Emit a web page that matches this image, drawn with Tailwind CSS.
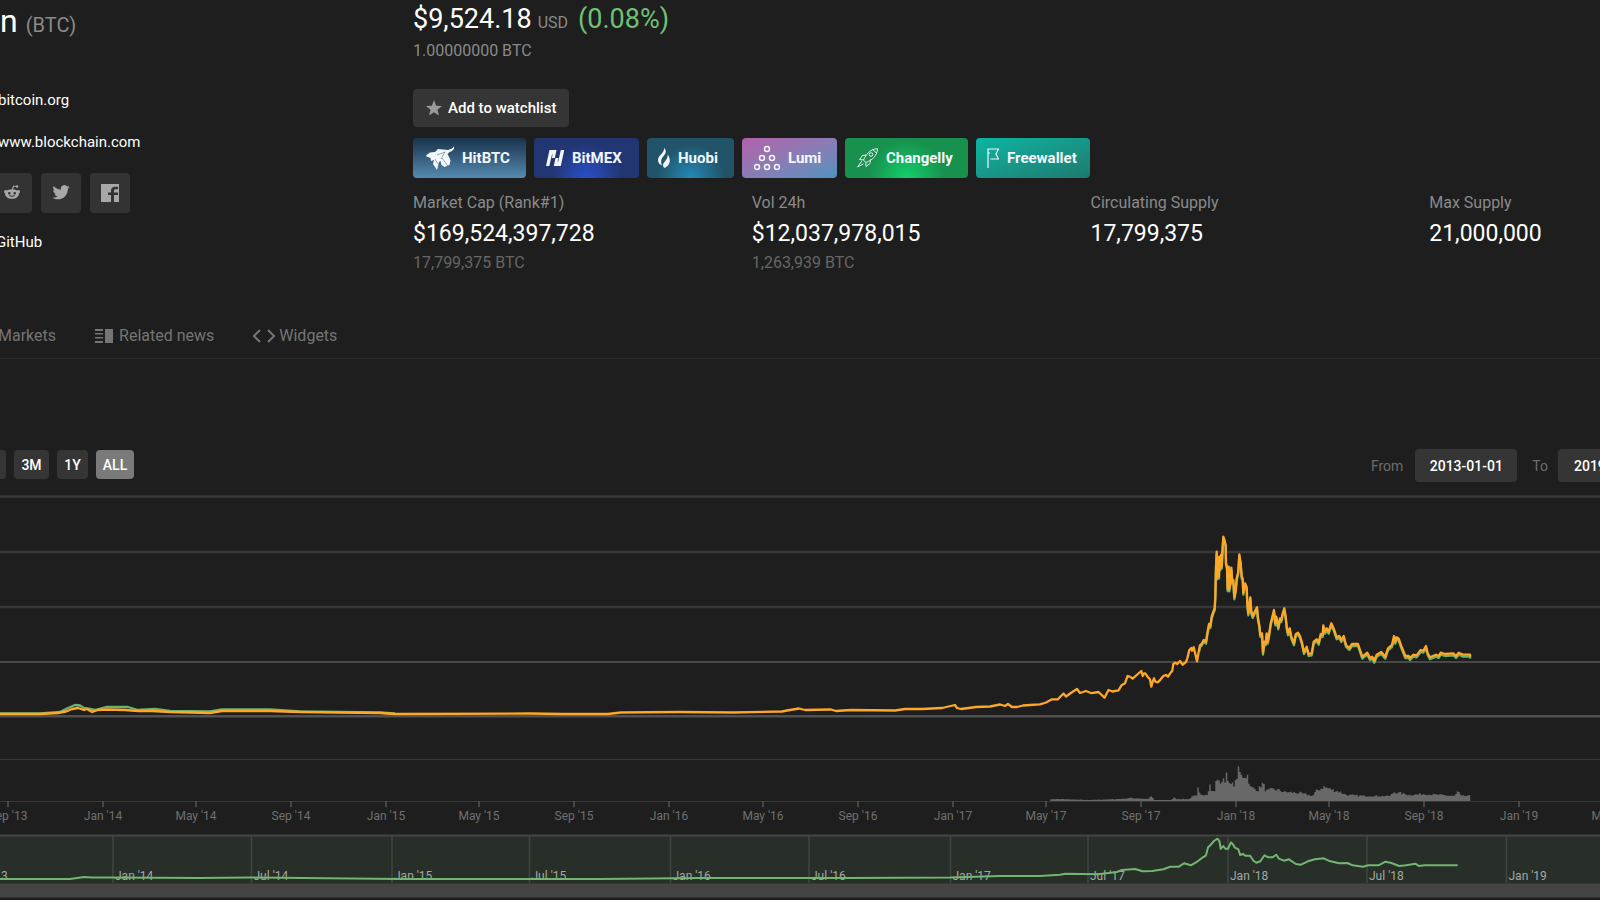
<!DOCTYPE html>
<html lang="en">
<head>
<meta charset="utf-8">
<title>Bitcoin (BTC)</title>
<script src="https://cdn.jsdelivr.net/npm/@tailwindcss/browser@4"></script>
</head>
<body class="min-h-screen overflow-x-hidden bg-[#1e1e1e] font-[Roboto,sans-serif] text-base text-white">
<div class="overflow-hidden">
  <header class="flex h-[318px] pt-px">
    <aside class="w-[413px] shrink-0">
      <h1 class="flex h-[39px] items-baseline gap-2 text-[32px] leading-[41px]">n <span class="text-xl text-[#8a8a8a]">(BTC)</span></h1>
      <div class="-ml-0.5 mt-12 flex flex-col items-start gap-[18px] text-[15px] leading-6">
        <a href="#">bitcoin.org</a>
        <a href="#">www.blockchain.com</a>
      </div>
      <div class="-ml-2 mt-[19px] flex gap-[9px]">
        <a href="#" aria-label="Reddit" class="flex size-10 items-center justify-center rounded bg-[#333]"><svg class="size-[18px] text-[#a8a8a8]" viewBox="0 0 18 18" fill="currentColor"><path fill-rule="evenodd" d="M9 5.3c.3-1.800 1-3.300 1.500-3.700.5-.2 1.600.2 2.400.4.3-1 2.400-1 2.500.5 0 1.500-2.100 1.800-2.500.5l-1.900-.4-.9 2.800c1.700.1 3 .5 4.100 1.100 1.500-1.100 3.400.4 2.800 1.700-.2.500-.6.800-1 1 .1 3.500-3.100 5.500-7 5.500s-7.100-2-7-5.500C.500 8.400.900 6.100 2.600 6c.4 0 .8.200 1.200.5C5 5.900 6.700 5.400 9 5.300ZM6.300 8a1.300 1.300 0 1 0 0 2.600 1.300 1.300 0 0 0 0-2.600Zm5.400 0a1.300 1.300 0 1 0 0 2.600 1.300 1.300 0 0 0 0-2.600ZM6 11.500c1.500 1.700 4.500 1.700 6 0l-.5-.4c-1.300 1-3.700 1-5 0Z"/></svg></a>
        <a href="#" aria-label="Twitter" class="flex size-10 items-center justify-center rounded bg-[#333]"><svg class="size-[18px] text-[#a8a8a8]" viewBox="0 1 24 24" fill="currentColor"><path d="M23.600 4.900c-.8.400-1.700.6-2.700.8 1-.6 1.700-1.500 2.100-2.600-.9.500-1.900.9-3 1.100a4.700 4.700 0 0 0-8.100 4.300C8 8.300 4.500 6.400 2.200 3.600c-1.300 2.200-.6 5 1.500 6.300-.8 0-1.500-.2-2.100-.6 0 2.300 1.600 4.300 3.800 4.700-.7.200-1.400.2-2.100.1.600 1.900 2.300 3.200 4.400 3.300A9.500 9.500 0 0 1 .7 19.300c9.600 5.700 20.600-.8 20.500-12 .9-.7 1.800-1.500 2.400-2.400Z"/></svg></a>
        <a href="#" aria-label="Facebook" class="flex size-10 items-center justify-center rounded bg-[#333]"><svg class="size-[18px] text-[#a8a8a8]" viewBox="0 0 18 18"><path fill="currentColor" d="M0 0h18v18H0z"/><path fill="#333" d="M10 18v-7H7V8.500h3V7c0-3 1.500-4.300 4-4.300h3v2.500h-2.200c-1.400 0-1.800.6-1.800 1.800v1.500H17v2.500h-4V18Z"/></svg></a>
      </div>
      <div class="-ml-1 mt-[17px] text-[15px] leading-6"><a href="#">GitHub</a></div>
    </aside>

    <main class="min-w-0 flex-1">
      <div class="flex items-baseline leading-9">
        <span class="text-[27px]">$9,524.18</span>
        <span class="ml-1.5 text-base text-[#8a8a8a]">USD</span>
        <span class="ml-2.5 text-[27px] text-[#6fc174]">(0.08%)</span>
      </div>
      <div class="mt-0.5 leading-6 text-[#8a8a8a]">1.00000000 BTC</div>
      <button class="mt-[26px] flex h-[38px] items-center gap-1.5 rounded bg-[#353535] px-[13px] text-[15px] font-medium"><svg class="size-4 text-[#9a9a9a]" viewBox="0 0 16 16" fill="currentColor"><path d="m8 0 2.100 5.700 5.900.3-4.600 3.700L13 15.500 8 12.200l-5 3.300 1.600-5.800L0 6l5.900-.3Z"/></svg>Add to watchlist</button>
      <div class="mt-[11px] flex gap-2 text-[15px] font-bold text-[#f4f8fc]">
        <a href="#" class="flex h-10 w-[113px] items-center gap-2 rounded bg-linear-to-b from-[#19344c] to-[#568bb2] pl-[13px]"><svg class="h-[26px] w-7" viewBox="0 0 28 26" fill="currentColor"><path d="M0 10.500 4 7.500 9 7 12 4l10 1c3-1 5.500-1.500 6.500-5 .5 4-1.500 6-5 7l-2 2 3 6-1 5-5 2-3-2-1-4-1.500 1-2 8-4-6 1-4-3 1-.5-3-4-1.500Z"/><path d="m11 10 8-3-4 7m1-1 6 8M9 14l3 5" fill="none" stroke="#34566f" stroke-width=".5"/></svg>HitBTC</a>
        <a href="#" class="flex h-10 w-[105px] items-center gap-2 rounded bg-[#233674] bg-[radial-gradient(circle_at_50%_100%,#2850cc_0,#233674_34px)] pl-3"><svg class="h-4 w-[18px]" viewBox="0 0 18 16" fill="currentColor"><path d="M0 16 3.500 0H10.500L8.800 8H5.800L6.700 4.500H6L3.300 16ZM14.800 0h3.500L14.800 16H7.800L9.500 8H12.500L11.600 11.500h.7Z"/></svg>BitMEX</a>
        <a href="#" class="flex h-10 w-[87px] items-center gap-2 rounded bg-[#215468] bg-[radial-gradient(circle_at_50%_100%,#2389b9_0,#215468_34px)] pl-[11px]"><svg class="h-5 w-3" viewBox="0 0 12 20" fill="currentColor"><path d="M6.400 0c3 4 .5 6.200-2 9.500-1.500 2-1.700 5.500-.3 8C-1 15.500-.8 10.500 2 7.500 4.500 5 6 3 6.400 0ZM9.500 6.500C13 10.500 13 17.500 6.500 20c-3-2.500-1-5 1.200-7.500 1.500-1.800 2.200-3.500 1.800-6Z"/></svg>Huobi</a>
        <a href="#" class="flex h-10 w-[95px] items-center gap-2 rounded bg-linear-to-br from-[#b25fa9] to-[#4992c0] pl-3"><svg class="size-[26px]" viewBox="0 0 26 26" fill="none" stroke="currentColor" stroke-width="1.500"><circle cx="13" cy="4" r="2.500"/><circle cx="8" cy="13" r="2.500"/><circle cx="18" cy="13" r="2.500"/><circle cx="3" cy="22" r="2.500"/><circle cx="13" cy="22" r="2.500"/><circle cx="23" cy="22" r="2.500"/></svg>Lumi</a>
        <a href="#" class="flex h-10 w-[123px] items-center gap-2 rounded bg-[#18914e] bg-[radial-gradient(circle_at_50%_100%,#12d06a_0,#18914e_38px)] pl-3"><svg class="h-5 w-[21px]" viewBox="0 0 21 20" fill="none" stroke="currentColor" stroke-width=".9"><path d="M20.500.7c-7 .5-10.500 4-14 11.300l2.300 2.500C16.500 11.500 20 7.500 20.500.7ZM15.500 1.500l4.500 4M9.500 7l-4 .5-3 4 4 .5m7-.5-.5 4-4 3-.2-4M4.800 13 .6 19l6-3.200"/><circle cx="14" cy="6.500" r="1.800"/></svg>Changelly</a>
        <a href="#" class="flex h-10 w-[114px] items-center gap-2 rounded bg-linear-to-br from-[#06b6a2] to-[#1c7a70] pl-[11px]"><svg class="h-5 w-3" viewBox="0 0 12 20" fill="none" stroke="currentColor" stroke-width="1.200"><path d="M1 20V1h10.500L9 6l2.500 5H3.500M1 5h2"/></svg>Freewallet</a>
      </div>
      <dl class="mt-[13px] -mr-[168px] grid grid-cols-4 text-[#8a8a8a]">
        <div><dt class="leading-6">Market Cap (Rank#1)</dt><dd class="mt-[3px] text-[23px] leading-8 text-white">$169,524,397,728</dd><dd class="mt-px leading-6 text-[#666]">17,799,375 BTC</dd></div>
        <div><dt class="leading-6">Vol 24h</dt><dd class="mt-[3px] text-[23px] leading-8 text-white">$12,037,978,015</dd><dd class="mt-px leading-6 text-[#666]">1,263,939 BTC</dd></div>
        <div><dt class="leading-6">Circulating Supply</dt><dd class="mt-[3px] text-[23px] leading-8 text-white">17,799,375</dd></div>
        <div><dt class="leading-6">Max Supply</dt><dd class="mt-[3px] text-[23px] leading-8 text-white">21,000,000</dd></div>
      </dl>
    </main>
  </header>

  <nav class="-ml-0.5 flex h-[41px] gap-[39px] border-b border-[#292929] pt-1.5 leading-6 text-[#757575]">
    <a href="#" class="h-6">Markets</a>
    <a href="#" class="flex h-6 items-center gap-1.5"><svg class="h-4 w-[18px]" viewBox="0 0 18 16" fill="currentColor"><path d="M0 1h8v2H0zM0 5h8v1.500H0zM0 9h8v1.500H0zM0 13h8v2H0zM10 1h8v14h-8z"/></svg>Related news</a>
    <a href="#" class="flex h-6 items-center gap-[3px]"><svg class="h-3.5 w-[23px]" viewBox="0 0 23 14" fill="none" stroke="currentColor" stroke-width="2"><path d="M7 1 1 7l6 6M15 1l6 6-6 6"/></svg>Widgets</a>
  </nav>

  <section>
    <div class="flex h-[135px] items-start justify-between pt-[90px] text-sm font-medium">
      <div class="flex gap-2 pt-px">
        <button aria-label="1M" class="-ml-7 h-[29px] w-[34px] rounded bg-[#353535]"></button>
        <button class="h-[29px] w-[35px] rounded bg-[#353535]">3M</button>
        <button class="h-[29px] w-[31px] rounded bg-[#353535]">1Y</button>
        <button class="h-[29px] w-[38px] rounded bg-[#7a7a7a]">ALL</button>
      </div>
      <div class="-mr-[60px] flex items-center">
        <label for="from" class="font-normal text-[#6c6c6c]">From</label>
        <input id="from" value="2013-01-01" class="ml-3 h-[33px] w-[102px] rounded bg-[#353535] text-center">
        <label for="to" class="ml-[15px] font-normal text-[#6c6c6c]">To</label>
        <input id="to" value="2019-07-09" class="ml-2.5 h-[33px] w-[102px] rounded bg-[#353535] pl-4">
      </div>
    </div>

    <svg class="block w-full" viewBox="0 494 1600 406" font-family="Roboto, sans-serif" font-size="12">
      <defs><path id="price" d=""/></defs>
      <g fill="none" stroke="#383838" stroke-width="2.500">
        <path d="M0 496.500H1600M0 552H1600M0 607H1600"/>
        <path d="M0 662H1600" stroke="#484848" stroke-width="2"/>
        <path d="M0 716.200H1600" stroke="#505050"/>
        <path d="M0 759.500H1600M0 801.500H1600" stroke-width="1"/>
      </g>
      <path id="volume" stroke="#686868" stroke-width="1.500" fill="none"/>
      <g fill="none" stroke-width="2.300" stroke-linejoin="round">
        <path stroke="#6fb36b" d="M0 713.500 40 713.500 60 712 68 708 75 705 80 705.500 84 708 90 709 95 710 106 707 128 707 138 710 155 709 170 711 210 711.500 222 709.500 270 709.500 300 711.500 380 712.500 395 713.500"/>
        <svg x="1200" y="494" width="400" height="406" viewBox="1200 492 400 406"><use href="#price" stroke="#6fb36b"/></svg>
        <path stroke="#ffa726" d="M0 714 40 714 58 713 66 711.500 72 709 78 708 84 710 87 709 92 712 98 710 106 709.500 125 710 138 711 152 711 170 712 210 713 222 711 270 711 300 712 380 713 395 714 530 713.500 562 714 608 714 621 712.500 679 712 733 712.500 782 711.500 787 710.500 799 708.500 805 710 831 709.500 836 711 851 710 895 710.500 905 709 922 709 942 708 955 705 957 708 961 709 976 707 990 706.500 1000 704.500 1005 706 1008 704 1012 707 1017 707 1023 705.500 1030 705 1040 704.300 1046 702.500 1052 699.300 1058 699.300 1060.500 696.500 1063.500 693.500 1066 696.500 1071.500 692.500 1077 689 1080 693 1086 691 1091.500 693.200 1098.500 692 1104.500 697.700 1108.500 690 1112.500 691.500 1118.500 690.300 1121.500 685.300 1125 683.300 1127.500 676 1130 676.700"/>
        <use href="#price" stroke="#ffa726"/>
      </g>
      <g id="axis" fill="#707070" text-anchor="middle"></g>

      <rect y="835" width="1600" height="49" fill="#282f29"/>
      <path d="M0 835.500H1600" stroke="#444" stroke-width="2"/>
      <rect y="883.500" width="1600" height="14" fill="#444"/>
      <g id="overviewAxis" fill="#a3a9a3"></g>
      <path id="overview" fill="none" stroke="#74b572" stroke-width="2" stroke-linejoin="round"/>
    </svg>
  </section>
</div>
<script>
  const byId = id => document.getElementById(id);
  const points = s => s.trim().split(/\s+/).map(p => p.split(',').map(Number));
  const trace = (pts, x0, y0, sx, sy) => 'M' + pts.map(p => (x0 + p[0] / sx).toFixed(1) + ' ' + (y0 + p[1] / sy).toFixed(1)).join('L');

  byId('price').setAttribute('d', trace(points(`0,530 8,536 20,525 34,513 38,528 42,520 46,520 54,532 60,538 64,560 68,545 72,535 76,545 84,547 92,538 100,528 108,525 114,530 122,518 127,512 130,492 136,488 142,492 150,483 158,494 168,486 172,475 178,450 184,444 186,452 191,442 196,462 201,484 206,455 210,436 216,430 221,420 228,425 232,400 237,372 241,378 245,350 250,335 254,325 256,290 258,200 260,155 262,232 264,175 267,230 268,170 271,205 273,165 275,200 278,140 280,110 283,118 287,135 288,190 291,200 293,268 296,200 298,268 301,250 304,203 307,245 310,240 313,292 317,270 320,235 325,215 328,163 332,190 335,230 338,235 340,278 345,250 350,262 352,310 355,340 361,292 364,335 368,348 374,335 381,322 384,355 388,375 391,405 396,400 399,458 403,425 407,430 410,400 413,425 417,405 422,370 426,355 432,330 436,370 439,350 445,382 450,355 454,360 458,340 463,325 467,350 470,380 474,400 479,385 484,410 492,430 497,403 504,398 510,408 516,428 522,456 530,440 536,462 545,460 551,425 560,418 566,428 572,402 578,405 580,376 585,395 590,385 596,395 604,370 612,388 620,412 628,408 634,420 641,408 648,435 658,444 666,432 684,432 690,450 697,470 712,458 720,474 727,470 733,482 740,464 754,456 766,470 774,445 786,435 792,408 796,425 800,412 806,416 814,438 826,468 836,468 840,474 850,464 860,466 872,450 880,452 888,438 893,460 900,472 918,464 926,468 932,458 945,462 970,460 978,468 986,458 1000,464 1020,464 1021,470`), 1130, 500, 3, 3));

  byId('overview').setAttribute('d', 'M0 879L70 879 84 877 92 877.500 110 877.500 200 878 250 877.500 400 879 600 879 700 878 850 878 950 877.500 1000 876 1040 876L' +
    trace(points(`0,404 15,401 110,403 165,396 180,390 218,387 240,394 268,393 300,388 320,380 345,380 360,370 380,376 400,364 415,352 424,346 430,322 437,315 447,303 458,296 463,304 467,327 474,318 480,326 488,326 497,307 503,314 508,323 518,328 523,345 532,342 538,347 552,347 562,362 570,368 582,364 594,346 605,352 618,352 628,344 636,356 650,362 665,358 685,372 700,374 720,364 740,358 766,355 780,362 810,370 835,369 850,376 880,380 895,376 925,376 945,365 960,368 985,378 1005,376 1032,371 1042,378 1060,376 1155,376`), 1060, 740, 2.904, 3).slice(1));

  // Volume bars: envelope heights with daily variation
  const vol = points(`1045,1 1055,2 1090,1 1120,2 1130,3 1148,2 1152,5 1154,1 1172,1 1174,4 1176,2 1190,2 1192,5 1197,5 1198,12 1200,6 1207,7 1210,16 1212,9 1215,10 1217,28 1218,18 1225,21 1227,31 1229,16 1235,17 1239,32 1241,25 1246,25 1248,26 1250,14 1258,11 1263,18 1266,10 1274,12 1285,9 1300,8 1313,5 1316,10 1324,14 1330,12 1340,9 1347,6 1365,5 1390,5 1394,9 1410,6 1424,7 1440,6 1455,5 1458,10 1461,5 1470,5`);
  let bars = '', k = 0, seed = 7;
  for (let x = 1051; x < 1471; x += 1.5) {
    while (k < vol.length - 2 && vol[k + 1][0] < x) k++;
    const [a, b] = [vol[k], vol[k + 1]];
    const h = a[1] + (b[1] - a[1]) * (x - a[0]) / (b[0] - a[0]);
    seed = seed * 16807 % 2147483647;
    bars += `M${x} 801v-${(h * (0.85 + 0.3 * seed / 2147483647)).toFixed(1)}`;
  }
  byId('volume').setAttribute('d', bars);

  byId('axis').innerHTML = [[8, "Sep '13"], [103, "Jan '14"], [196, "May '14"], [291, "Sep '14"], [386, "Jan '15"], [479, "May '15"], [574, "Sep '15"], [669, "Jan '16"], [763, "May '16"], [858, "Sep '16"], [953, "Jan '17"], [1046, "May '17"], [1141, "Sep '17"], [1236, "Jan '18"], [1329, "May '18"], [1424, "Sep '18"], [1519, "Jan '19"], [1612, "May '19"]]
    .map(([x, t]) => `<path d="M${x} 801v6" stroke="#555" stroke-width="1.500"/><text x="${x}" y="820">${t}</text>`).join('');
  byId('overviewAxis').innerHTML = [[-29, "Jul '13"], [113, "Jan '14"], [251.5, "Jul '14"], [392, "Jan '15"], [529.5, "Jul '15"], [670.5, "Jan '16"], [809, "Jul '16"], [950.5, "Jan '17"], [1088, "Jul '17"], [1228, "Jan '18"], [1367, "Jul '18"], [1506.5, "Jan '19"]]
    .map(([x, t]) => `<path d="M${x} 836v47" stroke="#3f4740" stroke-width="1.500"/><text x="${x + 2}" y="880">${t}</text>`).join('');
</script>
</body>
</html>
